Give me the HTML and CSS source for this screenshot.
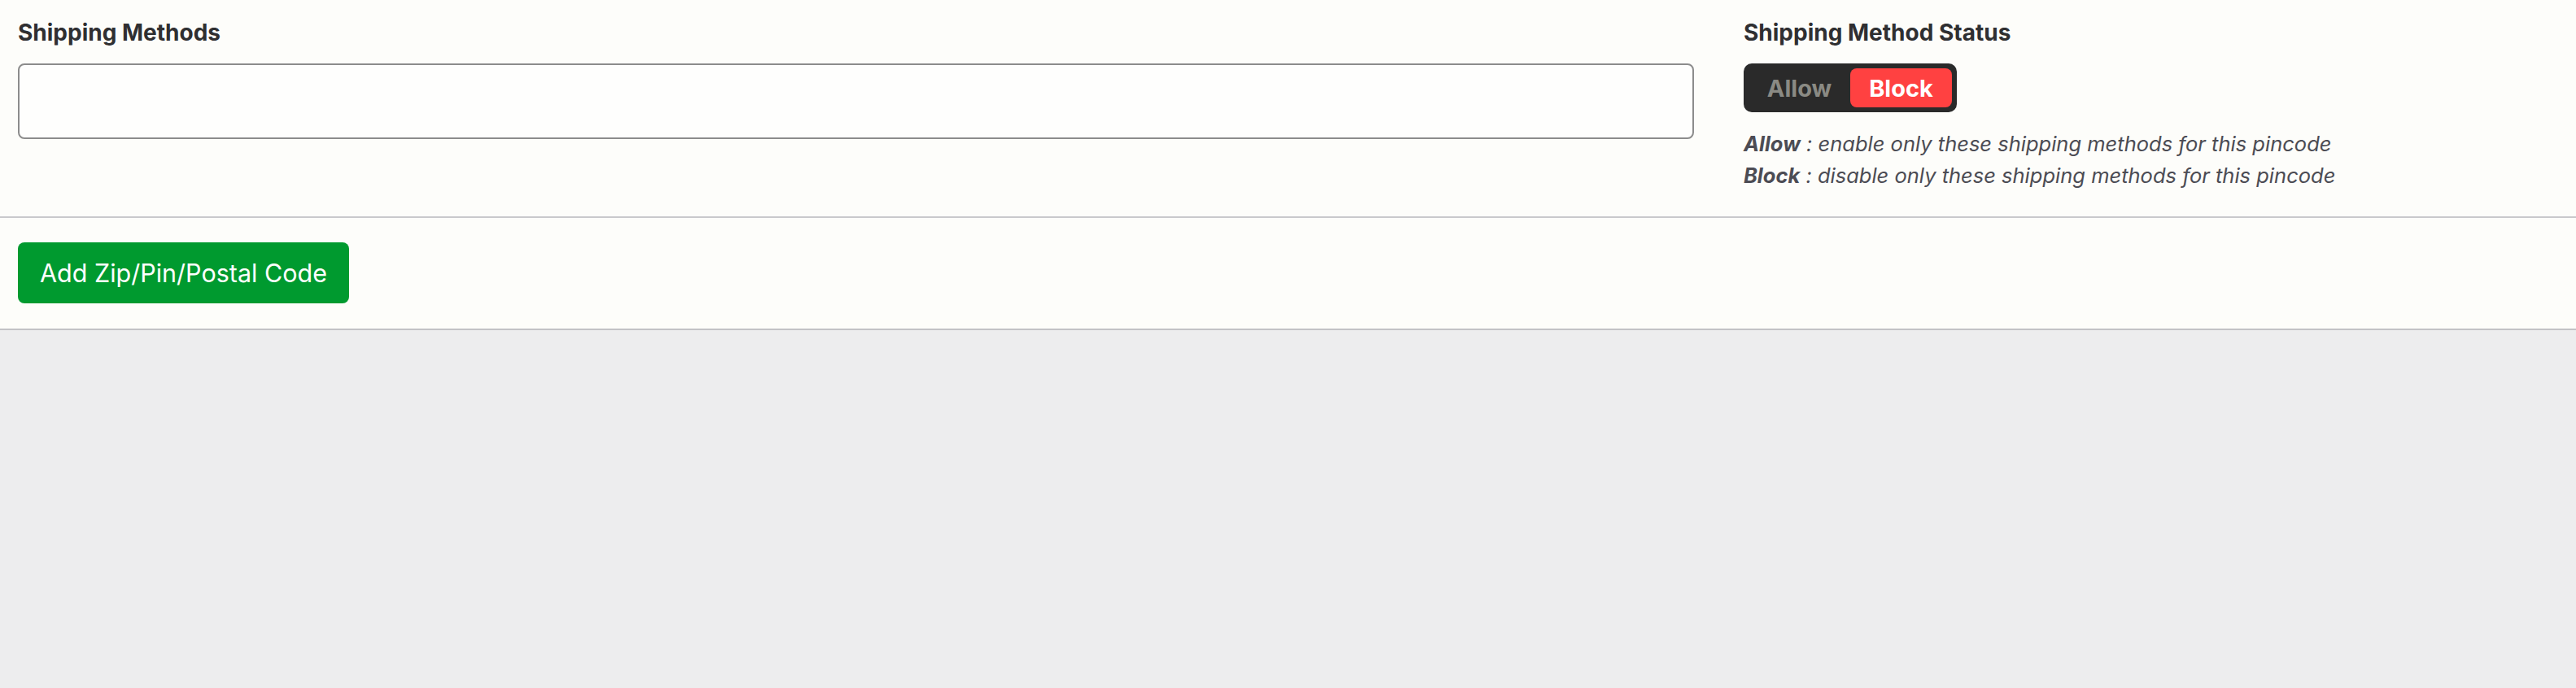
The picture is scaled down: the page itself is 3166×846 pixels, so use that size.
FILE: index.html
```html
<!DOCTYPE html>
<html lang="en">
<head>
<meta charset="utf-8">
<title>Shipping Methods</title>
<link rel="stylesheet" href="styles.css">
</head>
<body>
<div class="panel">
  <section class="fields">
    <div class="field field-methods">
      <label class="label" for="methods">Shipping Methods</label>
      <div class="select-box" id="methods"></div>
    </div>
    <div class="field field-status">
      <div class="label">Shipping Method Status</div>
      <div class="toggle">
        <span class="seg seg-off">Allow</span>
        <span class="seg seg-on">Block</span>
      </div>
      <div class="help">
        <p><b>Allow</b> : enable only these shipping methods for this pincode</p>
        <p><b>Block</b> : disable only these shipping methods for this pincode</p>
      </div>
    </div>
  </section>
  <section class="actions">
    <button class="btn-add" type="button">Add Zip/Pin/Postal Code</button>
  </section>
</div>
</body>
</html>
```
FILE: styles.css
```css
html, body {
  margin: 0;
  padding: 0;
}
body {
  background: #ededee;
  font-family: Inter, "Noto Sans", "Liberation Sans", sans-serif;
  color: #2e2e30;
}
.panel {
  background: #fdfdfa;
}
.fields {
  display: grid;
  grid-template-columns: 2060px 1fr;
  column-gap: 61px;
  padding: 23px 22px 0 22px;
  height: 243px;
}
.label {
  display: block;
  font-size: 28px;
  line-height: 34px;
  font-weight: 700;
  color: #2f2f31;
}
.select-box {
  margin-top: 21px;
  height: 89px;
  border: 2px solid #8c8c8c;
  border-radius: 8px;
  background: #fefefd;
}
.toggle {
  margin-top: 21px;
  display: inline-flex;
  padding: 6px;
  background: #2a2a2a;
  border-radius: 10px;
}
.seg {
  width: 125px;
  height: 48px;
  display: flex;
  align-items: center;
  justify-content: center;
  font-size: 29px;
  font-weight: 700;
  border-radius: 8px;
}
.seg-off {
  color: #8a8a84;
}
.seg-on {
  background: #ff4141;
  color: #ffffff;
}
.help {
  margin-top: 19px;
  font-size: 25.5px;
  line-height: 39px;
  font-style: italic;
  color: #4c4c54;
}
.help p {
  margin: 0;
}
.help b {
  font-weight: 700;
}
.actions {
  border-top: 2px solid #c9c9cc;
  border-bottom: 2px solid #c2c2c6;
  padding: 30px 22px 31px 22px;
}
.btn-add {
  display: block;
  height: 75px;
  padding: 0 27px;
  border: none;
  border-radius: 8px;
  background: #009a2f;
  color: #ffffff;
  font-family: Inter, "Noto Sans", "Liberation Sans", sans-serif;
  font-size: 30.5px;
  font-weight: 400;
}
```
